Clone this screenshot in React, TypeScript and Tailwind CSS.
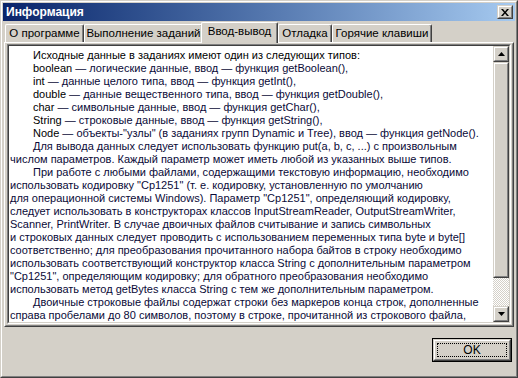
import React from 'react'

type Line = { text: string; indent?: boolean; key?: string }

const lines: Line[] = [
  { text: 'Исходные данные в заданиях имеют один из следующих типов:', indent: true },
  { key: 'boolean', text: ' — логические данные, ввод — функция getBoolean(),', indent: true },
  { key: 'int', text: ' — данные целого типа, ввод — функция getInt(),', indent: true },
  { key: 'double', text: ' — данные вещественного типа, ввод — функция getDouble(),', indent: true },
  { key: 'char', text: ' — символьные данные, ввод — функция getChar(),', indent: true },
  { key: 'String', text: ' — строковые данные, ввод — функция getString(),', indent: true },
  { key: 'Node', text: ' — объекты-"узлы" (в заданиях групп Dynamic и Tree), ввод — функция getNode().', indent: true },
  { text: 'Для вывода данных следует использовать функцию put(a, b, c, ...) с произвольным', indent: true },
  { text: 'числом параметров. Каждый параметр может иметь любой из указанных выше типов.' },
  { text: 'При работе с любыми файлами, содержащими текстовую информацию, необходимо', indent: true },
  { text: 'использовать кодировку "Cp1251" (т. е. кодировку, установленную по умолчанию' },
  { text: 'для операционной системы Windows). Параметр "Cp1251", определяющий кодировку,' },
  { text: 'следует использовать в конструкторах классов InputStreamReader, OutputStreamWriter,' },
  { text: 'Scanner, PrintWriter. В случае двоичных файлов считывание и запись символьных' },
  { text: 'и строковых данных следует проводить с использованием переменных типа byte и byte[]' },
  { text: 'соответственно; для преобразования прочитанного набора байтов в строку необходимо' },
  { text: 'использовать соответствующий конструктор класса String с дополнительным параметром' },
  { text: '"Cp1251", определяющим кодировку; для обратного преобразования необходимо' },
  { text: 'использовать метод getBytes класса String с тем же дополнительным параметром.' },
  { text: 'Двоичные строковые файлы содержат строки без маркеров конца строк, дополненные', indent: true },
  { text: 'справа пробелами до 80 символов, поэтому в строке, прочитанной из строкового файла,' },
]

const tabs = [
  { label: 'О программе', w: 'w-[79px]' },
  { label: 'Выполнение заданий', w: 'w-[119px]' },
  { label: 'Ввод-вывод', w: 'w-[77px]', active: true },
  { label: 'Отладка', w: 'w-[54px]' },
  { label: 'Горячие клавиши', w: 'w-[100px]' },
]

// classic raised 3D box (buttons, thumb)
const Raised = ({ className = '', children }: { className?: string; children?: React.ReactNode }) => (
  <div className={`border border-t-[#d4d0c8] border-l-[#d4d0c8] border-r-[#404040] border-b-[#404040] ${className}`}>
    <div className="h-full w-full border border-t-white border-l-white border-r-[#808080] border-b-[#808080] bg-[#d4d0c8] flex items-center justify-center">
      {children}
    </div>
  </div>
)

const Arrow = ({ up }: { up?: boolean }) => (
  <svg width="7" height="4" viewBox="0 0 7 4">
    {up ? <polygon points="3.5,0 7,4 0,4" fill="#000" /> : <polygon points="0,0 7,0 3.5,4" fill="#000" />}
  </svg>
)

export default function App() {
  return (
    <div className="w-[518px] h-[378px] bg-[#d4d0c8] font-['Liberation_Sans',sans-serif] text-[11px] text-black border border-t-[#d4d0c8] border-l-[#d4d0c8] border-r-[#404040] border-b-[#404040]">
      <div className="h-full border border-t-white border-l-white border-r-[#808080] border-b-[#808080] p-px flex flex-col">
        {/* title bar */}
        <div className="h-[18px] shrink-0 flex items-center justify-between pl-[3px] pr-[2px] bg-gradient-to-r from-[#0a246a] to-[#a6caf0]">
          <span className="text-white font-bold text-[12px] leading-none">Информация</span>
          <Raised className="w-[16px] h-[14px]">
            <svg width="8" height="7" viewBox="0 0 8 7">
              <path d="M0 0h2l2 2.5L6 0h2L5 3.5 8 7H6L4 4.5 2 7H0l3-3.5z" fill="#000" />
            </svg>
          </Raised>
        </div>

        {/* tabs */}
        <div className="h-[21px] shrink-0 flex items-end pl-[2px] whitespace-nowrap text-[11.5px]">
          {tabs.map((t) =>
            t.active ? (
              <div
                key={t.label}
                className={`${t.w} h-[21px] -ml-[2px] -mb-px relative z-10 bg-[#d4d0c8] rounded-t-[2px] border-t border-l border-r border-t-white border-l-white border-r-[#404040] shadow-[inset_-1px_0_0_#808080] flex items-center justify-center pb-[2px]`}
              >
                {t.label}
              </div>
            ) : (
              <div
                key={t.label}
                className={`${t.w} h-[18px] rounded-t-[2px] border-t border-l border-r border-t-white border-l-white border-r-[#404040] shadow-[inset_-1px_0_0_#808080] flex items-center justify-center pt-px`}
              >
                {t.label}
              </div>
            )
          )}
        </div>

        {/* tab panel */}
        <div className="h-[285px] shrink-0 mx-px border border-t-white border-l-white border-r-[#404040] border-b-[#404040]">
          <div className="h-full border border-t-[#d4d0c8] border-l-[#d4d0c8] border-r-[#808080] border-b-[#808080] px-px pb-px">
            {/* sunken text box */}
            <div className="h-full border border-t-[#808080] border-l-[#808080] border-r-white border-b-white">
              <div className="h-full border border-t-[#404040] border-l-[#404040] border-r-[#d4d0c8] border-b-[#d4d0c8] bg-white flex">
                <div className="flex-1 overflow-hidden pt-[3px] pl-px text-[#0a0a38] leading-[13px] whitespace-nowrap">
                  {lines.map((l, i) => (
                    <div key={i} className={l.indent ? 'pl-[23px]' : ''}>
                      {i === 0 ? <span className="text-black">{l.text}</span> : null}
                      {l.key ? <span className="text-black">{l.key}</span> : null}
                      {i > 0 ? l.text : null}
                    </div>
                  ))}
                </div>
                {/* scrollbar */}
                <div className="w-[16px] shrink-0 flex flex-col">
                  <Raised className="h-[16px] shrink-0">
                    <Arrow up />
                  </Raised>
                  <Raised className="h-[216px] shrink-0" />
                  <div className="flex-1 bg-[repeating-conic-gradient(#d4d0c8_0_25%,#ffffff_0_50%)] bg-[length:2px_2px]" />
                  <Raised className="h-[16px] shrink-0">
                    <Arrow />
                  </Raised>
                </div>
              </div>
            </div>
          </div>
        </div>

        {/* bottom */}
        <div className="flex-1 flex justify-end items-start pt-[11px] pr-[3px]">
          <div className="w-[80px] h-[24px] border border-black">
            <Raised className="h-full">
              <div className="w-full h-full p-[2px]">
                <div className="h-full border border-dotted border-black flex items-center justify-center text-[12px]">
                  OK
                </div>
              </div>
            </Raised>
          </div>
        </div>
      </div>
    </div>
  )
}
